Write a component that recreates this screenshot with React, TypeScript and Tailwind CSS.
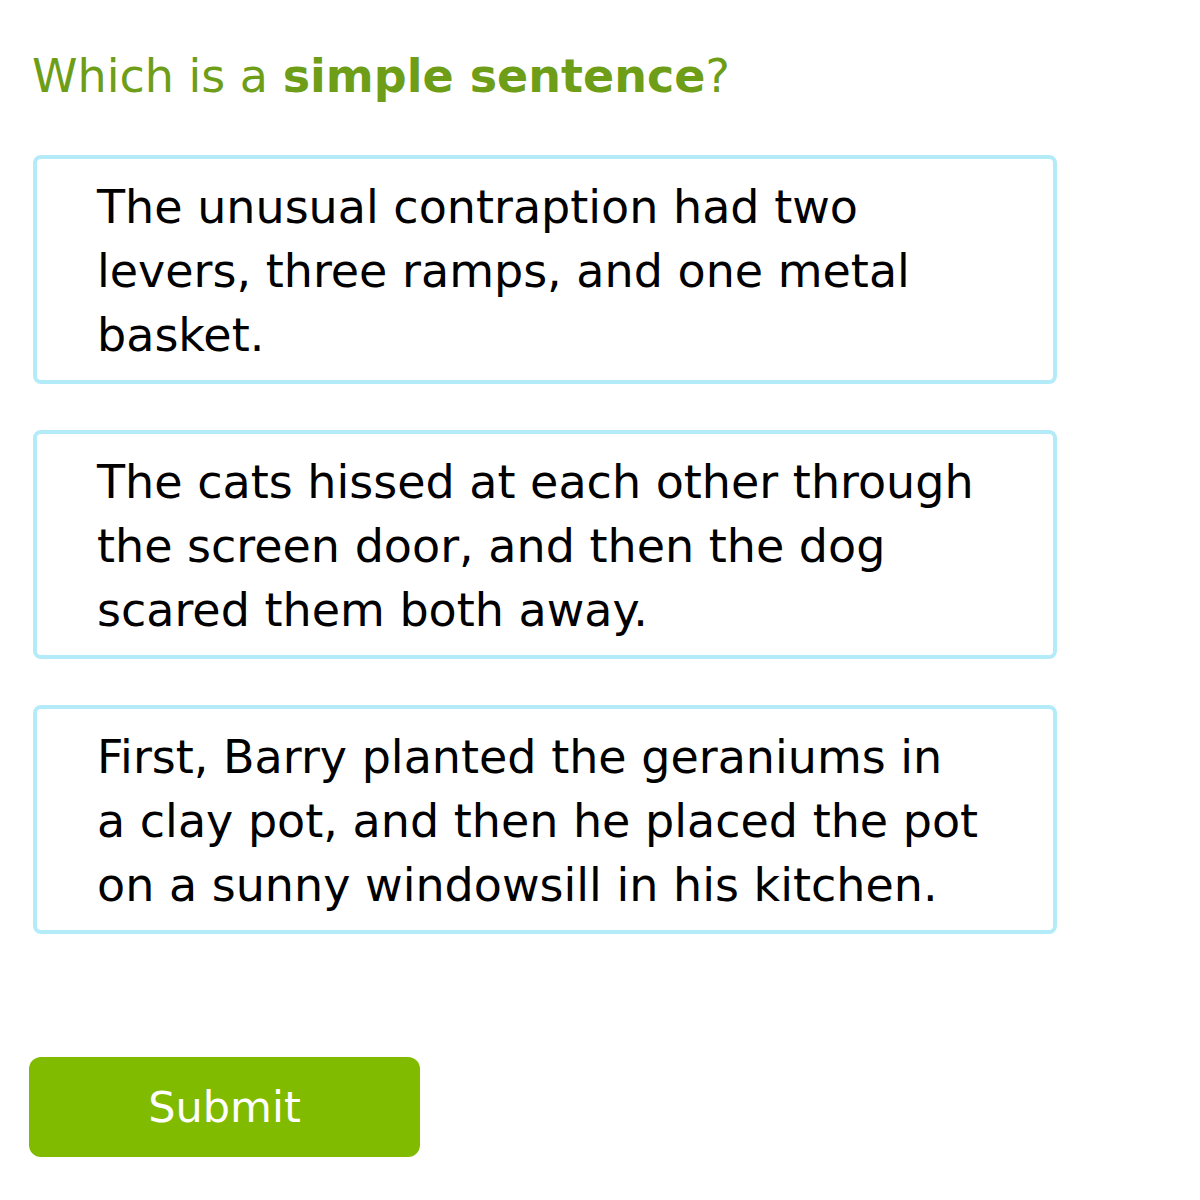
const options = [
  'The unusual contraption had two levers, three ramps, and one metal basket.',
  'The cats hissed at each other through the screen door, and then the dog scared them both away.',
  'First, Barry planted the geraniums in a clay pot, and then he placed the pot on a sunny windowsill in his kitchen.',
];

export default function App() {
  return (
    <div className="min-h-[1200px] w-[1200px] bg-white font-['DejaVu_Sans',Verdana,sans-serif]">
      {/* Question */}
      <div className="pl-[32px] pt-[44px] text-[46px] leading-[64px] text-[#6e9d17]">
        Which is a <span className="font-bold">simple sentence</span>?
      </div>

      {/* Choices */}
      <div className="mt-[47px] ml-[33px] flex w-[1024px] flex-col gap-[46px]">
        {options.map((text) => (
          <button
            key={text}
            className="rounded-[8px] border-4 border-[#b3ebf9] bg-white pl-[60px] pr-[72px] pt-[16px] pb-[13px] text-left text-[46px] leading-[64px] text-black"
          >
            {text}
          </button>
        ))}
      </div>

      {/* Submit */}
      <div className="mt-[123px] ml-[29px]">
        <button className="h-[100px] w-[391px] rounded-[12px] bg-[#80bb00] text-[43px] text-white">
          Submit
        </button>
      </div>
    </div>
  );
}
